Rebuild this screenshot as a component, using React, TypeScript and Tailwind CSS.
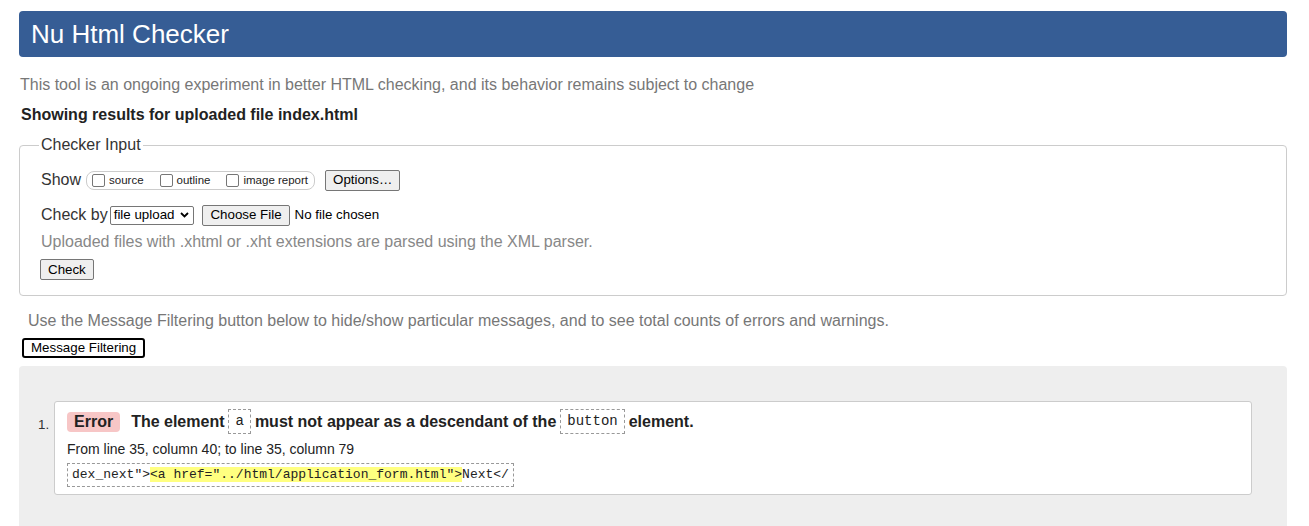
const sans = "font-['Liberation_Sans',Arial,sans-serif]";

const Checkbox = ({ label }: { label: string }) => (
  <label className="flex items-center gap-[4px]">
    <span className="w-[13px] h-[13px] rounded-[2px] border border-[#767676] bg-white" />
    <span className="text-[11.5px] leading-none mt-[2px]">{label}</span>
  </label>
);

const NativeButton = ({ children, className = "" }: { children: React.ReactNode; className?: string }) => (
  <button
    className={`h-[21px] px-[7px] text-[13.33px] leading-none text-black bg-[#efefef] border border-[#767676] rounded-[2px] ${className}`}
  >
    {children}
  </button>
);

const Code = ({ children }: { children: React.ReactNode }) => (
  <code className="inline-block mx-[4px] px-[6px] py-[3px] border border-dashed border-[#999] font-['Liberation_Mono',monospace] font-normal text-[14px] leading-[17px] text-[#222]">
    {children}
  </code>
);

export default function App() {
  return (
    <div className={`${sans} min-h-[526px] bg-white pl-[19px] pr-[22px] pt-[11px] text-[#222]`}>
      <header className="h-[46px] flex items-center px-[12px] bg-[#365d95] rounded-[4px]">
        <h1 className="text-[26px] text-white leading-none">Nu Html Checker</h1>
      </header>

      <p className="mt-[19px] ml-[1px] text-[16px] leading-[18px] text-[#777]">
        This tool is an ongoing experiment in better HTML checking, and its behavior remains subject to change
      </p>
      <p className="mt-[12px] ml-[2px] text-[16px] leading-[18px] font-bold text-[#222]">
        Showing results for uploaded file index.html
      </p>

      <fieldset className="mt-[12px] border border-[#ccc] rounded-[4px] pl-[19px] pr-[20px] pb-[14px]">
        <legend className="px-[2px] text-[16px] leading-[18px] text-[#333]">Checker Input</legend>

        <div className="flex items-center mt-[15px] h-[22px]">
          <span className="text-[16px] text-[#333] mr-[5px] ml-[2px]">Show</span>
          <div className="flex items-center gap-[16px] h-[19px] pl-[5px] pr-[6px] border border-[#ccc] rounded-[8px]">
            <Checkbox label="source" />
            <Checkbox label="outline" />
            <Checkbox label="image report" />
          </div>
          <NativeButton className="ml-[10px]">Options…</NativeButton>
        </div>

        <div className="flex items-center mt-[13px] h-[22px]">
          <span className="text-[16px] text-[#333] ml-[2px] mr-[2px]">Check by</span>
          <div className="flex items-center gap-[6px] h-[19px] pl-[3px] pr-[4px] border border-[#767676] rounded-[2px] text-[13.33px] text-black">
            file upload
            <svg width="9" height="6" viewBox="0 0 9 6" fill="none" stroke="black" strokeWidth="1.8">
              <path d="M1 1l3.5 3.5L8 1" />
            </svg>
          </div>
          <NativeButton className="ml-[8px]">Choose File</NativeButton>
          <span className="ml-[5px] text-[13.33px] text-black">No file chosen</span>
        </div>

        <p className="mt-[7px] ml-[2px] text-[16px] leading-[18px] text-[#888]">
          Uploaded files with .xhtml or .xht extensions are parsed using the XML parser.
        </p>

        <NativeButton className="mt-[8px] ml-[1px] h-[20px]">Check</NativeButton>
      </fieldset>

      <p className="mt-[16px] ml-[9px] text-[16px] leading-[18px] text-[#777]">
        Use the Message Filtering button below to hide/show particular messages, and to see total counts of errors and warnings.
      </p>
      <button className="mt-[8px] ml-[3px] h-[20px] px-[7px] text-[13.33px] leading-none text-black bg-white border-2 border-black rounded-[3px]">
        Message Filtering
      </button>

      <section className="mt-[7px] min-h-[161px] bg-[#eee] rounded-t-[4px] pt-[35px] pl-[35px] pr-[35px] pb-[30px]">
        <ol className="list-none">
          <li className="flex">
            <span className="w-0 -ml-[16px] pr-[16px] mt-[14px] text-[13.33px] text-[#333]">1.</span>
            <div className="flex-1 bg-white border border-[#ccc] rounded-[3px] pl-[12px] pt-[7px] pb-[7px]">
              <div className="flex items-center text-[16px] font-bold text-[#222]">
                <span className="px-[7px] h-[20px] flex items-center bg-[#f7c6c6] rounded-[4px] text-[#222] mr-[11px]">Error</span>
                The element<Code>a</Code>must not appear as a descendant of the<Code>button</Code>element.
              </div>
              <p className="mt-[7px] text-[14px] leading-[16px] text-[#222]">
                From line 35, column 40; to line 35, column 79
              </p>
              <div className="mt-[6px] inline-block px-[4px] h-[24px] leading-[22px] border border-dashed border-[#999] font-['Liberation_Mono',monospace] text-[13px] text-[#222]">
                dex_next"&gt;<mark className="bg-[#ffff80] text-[#222]">&lt;a href="../html/application_form.html"&gt;</mark>Next&lt;/
              </div>
            </div>
          </li>
        </ol>
      </section>
    </div>
  );
}
